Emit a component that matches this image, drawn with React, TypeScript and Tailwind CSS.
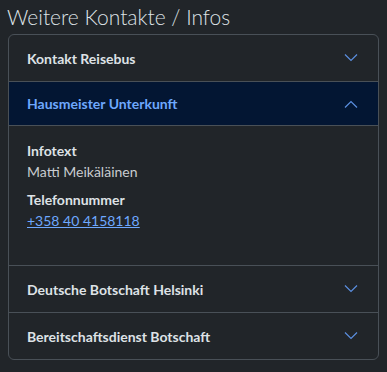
import React from 'react';

function Chevron({ up }: { up?: boolean }) {
  return (
    <svg width="14" height="8" viewBox="0 0 14 8" fill="none" className="shrink-0">
      <path
        d={up ? 'M1 7.5 7 1.5 13 7.5' : 'M1 0.5 7 6.5 13 0.5'}
        stroke="#5b8fe0"
        strokeWidth="1.2"
      />
    </svg>
  );
}

function Header({ title, open }: { title: string; open?: boolean }) {
  return (
    <button
      type="button"
      className={
        open
          ? 'w-full h-[44px] flex items-center justify-between pl-[18px] pr-[20px] bg-[#031633] text-[#6ea8fe] border-b border-[#495057]'
          : 'w-full h-[46px] flex items-center justify-between pl-[18px] pr-[20px] text-[#dee2e6]'
      }
    >
      <span className="text-[14px] font-bold">{title}</span>
      <Chevron up={open} />
    </button>
  );
}

export default function App() {
  return (
    <div className="w-[387px] h-[372px] bg-[#212529] text-[#dee2e6] px-2 pt-[3px] font-['Lato',sans-serif]">
      <h2 className="text-[21px] font-light leading-[27px] mb-[4px] -ml-[1px]">Weitere Kontakte / Infos</h2>
      <div className="border border-[#495057] rounded-md overflow-hidden">
        <Header title="Kontakt Reisebus" />
        <div className="border-t border-[#495057]">
          <Header title="Hausmeister Unterkunft" open />
          <div className="pl-[18px] pr-5 pt-[14px] pb-[34px] text-[14px] leading-[21px]">
            <p className="font-bold">Infotext</p>
            <p className="text-[#c9ccd0] mb-[7px]">Matti Meikäläinen</p>
            <p className="font-bold">Telefonnummer</p>
            <a href="#" className="text-[#6ea8fe] underline">
              +358 40 4158118
            </a>
          </div>
        </div>
        <div className="border-t border-[#495057]">
          <Header title="Deutsche Botschaft Helsinki" />
        </div>
        <div className="border-t border-[#495057]">
          <Header title="Bereitschaftsdienst Botschaft" />
        </div>
      </div>
    </div>
  );
}
